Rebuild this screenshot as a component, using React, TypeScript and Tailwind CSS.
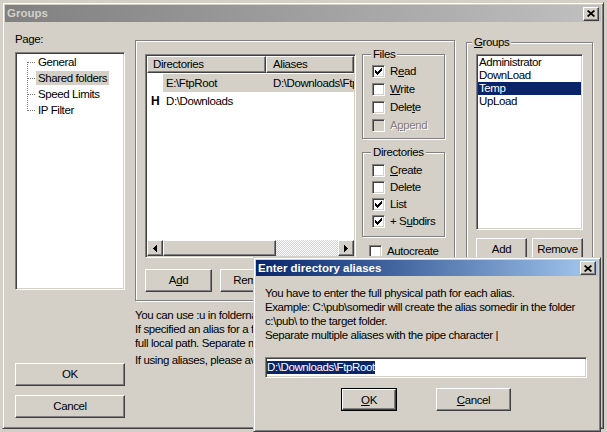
import React from "react";

const RAISED =
  "border border-t-white border-l-white border-r-[#404040] border-b-[#404040] shadow-[inset_-1px_-1px_0_#808080]";
const SUNKEN =
  "border border-t-[#808080] border-l-[#808080] border-r-white border-b-white shadow-[inset_1px_1px_0_#404040,inset_-1px_-1px_0_#d4d0c8] p-[1px]";
const FRAME =
  "border border-t-[#d4d0c8] border-l-[#d4d0c8] border-r-[#404040] border-b-[#404040] shadow-[inset_1px_1px_0_#fff,inset_-1px_-1px_0_#808080]";
const ETCH = "border border-[#808080] shadow-[1px_1px_0_#fff,inset_1px_1px_0_#fff]";

function Btn({
  children,
  className = "",
  def = false,
}: {
  children?: React.ReactNode;
  className?: string;
  def?: boolean;
}) {
  if (def)
    return (
      <div className={`border border-black shrink-0 ${className}`}>
        <div className={`w-full h-full flex items-center justify-center bg-[#d4d0c8] ${RAISED}`}>{children}</div>
      </div>
    );
  return (
    <div className={`flex items-center justify-center shrink-0 bg-[#d4d0c8] ${RAISED} ${className}`}>{children}</div>
  );
}

function XGlyph() {
  return (
    <svg width="8" height="7" viewBox="0 0 8 7">
      <path d="M0.6 0.5 L7.4 6.5 M7.4 0.5 L0.6 6.5" stroke="#000" strokeWidth="1.7" />
    </svg>
  );
}

function CloseBtn({ className = "" }: { className?: string }) {
  return (
    <div className={`w-[16px] h-[14px] shrink-0 bg-[#d4d0c8] flex items-center justify-center ${RAISED} ${className}`}>
      <XGlyph />
    </div>
  );
}

function CheckMark() {
  const t = [2, 3, 4, 3, 2, 1, 0];
  return (
    <svg width="7" height="7" viewBox="0 0 7 7" shapeRendering="crispEdges">
      {t.map((y, x) => (
        <rect key={x} x={x} y={y} width="1" height="3" fill="#000" />
      ))}
    </svg>
  );
}

function Check({ checked = false, disabled = false }: { checked?: boolean; disabled?: boolean }) {
  return (
    <div
      className={`w-[13px] h-[13px] shrink-0 flex items-center justify-center ${SUNKEN} ${
        disabled ? "bg-[#d4d0c8]" : "bg-white"
      }`}
    >
      {checked && <CheckMark />}
    </div>
  );
}

function CheckRow({
  children,
  checked = false,
  disabled = false,
}: {
  children: React.ReactNode;
  checked?: boolean;
  disabled?: boolean;
}) {
  return (
    <div className="h-[13px] flex items-center gap-[5px] whitespace-nowrap">
      <Check checked={checked} disabled={disabled} />
      <span className={disabled ? "text-[#808080] [text-shadow:1px_1px_0_#fff]" : ""}>{children}</span>
    </div>
  );
}

function GroupBox({
  label,
  className = "",
  labelLeft = "left-[8px]",
  children,
}: {
  label: React.ReactNode;
  className?: string;
  labelLeft?: string;
  children?: React.ReactNode;
}) {
  return (
    <div className={`relative shrink-0 ${ETCH} ${className}`}>
      <span className={`absolute -top-[7px] ${labelLeft} px-[2px] bg-[#d4d0c8] leading-[13px] whitespace-nowrap`}>
        {label}
      </span>
      {children}
    </div>
  );
}

function ArrowLeft() {
  return (
    <svg width="4" height="7" viewBox="0 0 4 7" shapeRendering="crispEdges">
      <rect x="3" y="0" width="1" height="7" />
      <rect x="2" y="1" width="1" height="5" />
      <rect x="1" y="2" width="1" height="3" />
      <rect x="0" y="3" width="1" height="1" />
    </svg>
  );
}

function ArrowRight() {
  return (
    <svg width="4" height="7" viewBox="0 0 4 7" shapeRendering="crispEdges">
      <rect x="0" y="0" width="1" height="7" />
      <rect x="1" y="1" width="1" height="5" />
      <rect x="2" y="2" width="1" height="3" />
      <rect x="3" y="3" width="1" height="1" />
    </svg>
  );
}

export default function App() {
  const treeItems = ["General", "Shared folders", "Speed Limits", "IP Filter"];
  const groups = ["Administrator", "DownLoad", "Temp", "UpLoad"];
  return (
    <div className="w-[607px] h-[432px] bg-[#d4d0c8] relative overflow-hidden font-['Liberation_Sans',Arial,sans-serif] text-[11.5px] leading-[13px] tracking-[-0.4px] text-black">
      {/* Groups window */}
      <div className={`ml-[2px] mt-[2px] w-[602px] h-[427px] p-[2px] flex flex-col ${FRAME}`}>
        <div className="h-[17px] shrink-0 flex items-center pl-[2px] pr-[2px] bg-gradient-to-r from-[#808080] to-[#c0c0c0]">
          <span className="font-bold tracking-normal text-[#d4d0c8]">Groups</span>
          <CloseBtn className="ml-auto" />
        </div>

        <div className="flex items-start">
          {/* Left column */}
          <div className="ml-[10px] w-[110px] flex flex-col shrink-0">
            <div className="mt-[11px] h-[13px]">Page:</div>
            <div className={`mt-[6px] h-[238px] bg-white ${SUNKEN}`}>
              <div className="flex">
                <svg width="19" height="64" className="shrink-0">
                  <line x1="10.5" y1="8" x2="10.5" y2="57" stroke="#808080" strokeDasharray="1 1" />
                  {[8.5, 24.5, 40.5, 56.5].map((y) => (
                    <line key={y} x1="11" y1={y} x2="19" y2={y} stroke="#808080" strokeDasharray="1 1" />
                  ))}
                </svg>
                <div className="flex flex-col">
                  {treeItems.map((t) => (
                    <div key={t} className="h-[16px] flex items-center">
                      <span
                        className={`px-[2px] h-[14px] leading-[14px] whitespace-nowrap ${
                          t === "Shared folders" ? "bg-[#d4d0c8]" : ""
                        }`}
                      >
                        {t}
                      </span>
                    </div>
                  ))}
                </div>
              </div>
            </div>
            <Btn className="mt-[73px] h-[23px]">OK</Btn>
            <Btn className="mt-[9px] h-[23px]">Cancel</Btn>
          </div>

          {/* Middle column */}
          <div className="ml-[10px] w-[320px] flex flex-col shrink-0">
            <div className={`mt-[18px] h-[261px] flex items-start ${ETCH}`}>
              <div className="ml-[9px] mt-[13px] w-[211px] flex flex-col shrink-0">
                <div className={`h-[204px] bg-white flex flex-col ${SUNKEN}`}>
                  <div className="h-[17px] flex shrink-0">
                    <div className={`w-[119px] h-full flex items-center pl-[5px] bg-[#d4d0c8] ${RAISED}`}>
                      Directories
                    </div>
                    <div className={`flex-1 h-full flex items-center pl-[6px] bg-[#d4d0c8] ${RAISED}`}>Aliases</div>
                  </div>
                  <div className="flex-1 pt-[1px] overflow-hidden">
                    <div className="h-[18px] flex">
                      <div className="w-[16px] shrink-0" />
                      <div className="flex-1 flex items-center bg-[#d4d0c8] whitespace-nowrap overflow-hidden">
                        <span className="w-[103px] pl-[3px] shrink-0">{"E:\\FtpRoot"}</span>
                        <span className="pl-[7px]">{"D:\\Downloads\\FtpRoot"}</span>
                      </div>
                    </div>
                    <div className="h-[18px] flex items-center whitespace-nowrap">
                      <div className="w-[16px] shrink-0 pl-[4px] font-bold text-[12px] tracking-normal">H</div>
                      <span className="pl-[3px]">{"D:\\Downloads"}</span>
                    </div>
                  </div>
                  <div className="h-[16px] flex shrink-0">
                    <div className={`w-[16px] h-full bg-[#d4d0c8] flex items-center justify-center ${RAISED}`}>
                      <ArrowLeft />
                    </div>
                    <div className={`w-[113px] h-full bg-[#d4d0c8] ${RAISED}`} />
                    <div className="flex-1 h-full bg-[image:repeating-conic-gradient(#d4d0c8_0%_25%,#ffffff_0%_50%)] bg-[length:2px_2px]" />
                    <div className={`w-[16px] h-full bg-[#d4d0c8] flex items-center justify-center ${RAISED}`}>
                      <ArrowRight />
                    </div>
                  </div>
                </div>
                <div className="mt-[11px] flex gap-[8px]">
                  <Btn className="w-[67px] h-[23px]">
                    A<u>d</u>d
                  </Btn>
                  <div className="w-[33px] h-[23px] overflow-hidden shrink-0">
                    <Btn className="w-[67px] h-[23px]">Remove</Btn>
                  </div>
                </div>
              </div>

              <div className="ml-[6px] mt-[13px] w-[83px] flex flex-col shrink-0">
                <GroupBox label="Files" className="h-[85px]">
                  <div className="pl-[9px] pt-[10px] flex flex-col gap-[5px]">
                    <CheckRow checked>
                      R<u>e</u>ad
                    </CheckRow>
                    <CheckRow>
                      <u>W</u>rite
                    </CheckRow>
                    <CheckRow>
                      Dele<u>t</u>e
                    </CheckRow>
                    <CheckRow disabled>
                      A<u>p</u>pend
                    </CheckRow>
                  </div>
                </GroupBox>
                <GroupBox label="Directories" className="mt-[13px] h-[85px]">
                  <div className="pl-[9px] pt-[11px] flex flex-col gap-[4px]">
                    <CheckRow>
                      <u>C</u>reate
                    </CheckRow>
                    <CheckRow>Delete</CheckRow>
                    <CheckRow checked>List</CheckRow>
                    <CheckRow checked>
                      + S<u>u</u>bdirs
                    </CheckRow>
                  </div>
                </GroupBox>
                <div className="mt-[8px] ml-[7px] h-[11px] overflow-hidden">
                  <CheckRow>Autocreate</CheckRow>
                </div>
              </div>
            </div>

            <div className="mt-[7px] w-[118px] overflow-hidden leading-[14px] whitespace-nowrap">
              <div>You can use :u in foldernames to use the name of the user.</div>
              <div>If specified an alias for a folder, the alias has to be the</div>
              <div>full local path. Separate multiple aliases with the pipe character.</div>
              <div className="mt-[3px]">If using aliases, please avoid cyclic directory structures.</div>
            </div>
          </div>

          {/* Right column */}
          <GroupBox
            label={
              <>
                <u>G</u>roups
              </>
            }
            labelLeft="left-[5px]"
            className="ml-[11px] mt-[20px] w-[127px] h-[260px]"
          >
            <div className={`ml-[9px] mt-[11px] w-[107px] h-[176px] bg-white ${SUNKEN}`}>
              {groups.map((g) => (
                <div
                  key={g}
                  className={`h-[13px] pl-[1px] whitespace-nowrap ${g === "Temp" ? "bg-[#0a246a] text-white" : ""}`}
                >
                  {g}
                </div>
              ))}
            </div>
            <div className="ml-[9px] mt-[8px] flex gap-[5px]">
              <Btn className="w-[51px] h-[23px]">Add</Btn>
              <Btn className="w-[51px] h-[23px]">Remove</Btn>
            </div>
          </GroupBox>
        </div>
      </div>

      {/* Enter directory aliases dialog */}
      <div
        className={`absolute left-[253px] top-[257px] w-[348px] h-[175px] p-[2px] bg-[#d4d0c8] flex flex-col ${FRAME}`}
      >
        <div className="h-[16px] shrink-0 flex items-center pl-[2px] bg-gradient-to-r from-[#0a246a] to-[#a6caf0]">
          <span className="font-bold text-white tracking-normal">Enter directory aliases</span>
          <CloseBtn className="ml-auto mr-[2px]" />
        </div>
        <div className="pl-[9px] pt-[10px] leading-[14px] whitespace-nowrap">
          <div>You have to enter the full physical path for each alias.</div>
          <div>{"Example: C:\\pub\\somedir will create the alias somedir in the folder"}</div>
          <div>{"c:\\pub\\ to the target folder."}</div>
          <div>Separate multiple aliases with the pipe character |</div>
          <div className={`mt-[15px] w-[322px] h-[21px] bg-white flex items-center ${SUNKEN}`}>
            <span className="bg-[#0a246a] text-white leading-[13px]">{"D:\\Downloads\\FtpRoot"}</span>
          </div>
          <div className="mt-[10px] ml-[76px] flex gap-[39px]">
            <Btn def className="w-[56px] h-[23px]">
              <u>O</u>K
            </Btn>
            <Btn className="w-[75px] h-[23px]">
              <u>C</u>ancel
            </Btn>
          </div>
        </div>
      </div>
    </div>
  );
}
